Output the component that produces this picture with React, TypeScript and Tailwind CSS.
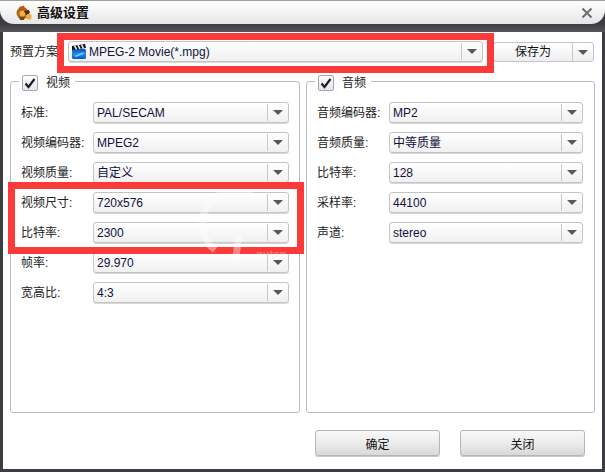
import React from 'react';

const font = { fontFamily: '"Liberation Sans", "Noto Sans CJK SC", sans-serif' };

const Arrow: React.FC = () => (
    <svg width="10" height="5" viewBox="0 0 10 5" className="block">
        <polygon points="0,0 10,0 5,5" fill="#55585c" />
    </svg>
);

const Combo: React.FC<{ value: string; className?: string; icon?: React.ReactNode }> = ({ value, className, icon }) => (
    <div className={`flex h-[21px] items-center rounded-[3px] border border-[#c3c3c8] bg-gradient-to-b from-[#ffffff] to-[#f0f0f0] shadow-[0_1px_0_#d8d8d8] ${className ?? ''}`}>
        <div className="flex min-w-0 flex-1 items-center gap-[2px] pl-[3px] text-[12px] text-[#101040]">
            {icon}
            <span>{value}</span>
        </div>
        <div className="my-[1px] flex h-[17px] w-[21px] items-center justify-center border-l border-[#c8c8c8]">
            <Arrow />
        </div>
    </div>
);

const Row: React.FC<{ label: string; value: string }> = ({ label, value }) => (
    <div className="flex h-[21px] items-center">
        <span className="w-[72px] shrink-0 text-[12px] leading-none text-[#222]">{label}</span>
        <Combo value={value} className="flex-1" />
    </div>
);

const CheckBox: React.FC = () => (
    <div className="flex h-[16px] w-[16px] items-center justify-center rounded-[2px] border border-[#a8a8ac] bg-gradient-to-b from-[#ffffff] to-[#e4e4e4]">
        <svg width="12" height="11" viewBox="0 0 12 11">
            <path d="M1.5 5.5 L4.5 9 L10.5 1" fill="none" stroke="#16202c" strokeWidth="2.2" />
        </svg>
    </div>
);

const Group: React.FC<{ title: string; rows: [string, string][]; className: string }> = ({ title, rows, className }) => (
    <div className={`relative h-[332px] rounded-[3px] border border-[#b9bcc2] ${className}`}>
        <div className="absolute left-[8px] top-[-7px] flex h-[16px] items-center gap-[8px] bg-white px-[3px]">
            <CheckBox />
            <span className="pr-[2px] text-[12px] text-[#222]">{title}</span>
        </div>
        <div className="flex flex-col gap-[9px] pt-[20px]">
            {rows.map(([label, value]) => (
                <Row key={label} label={label} value={value} />
            ))}
        </div>
    </div>
);

const ClapperIcon: React.FC = () => (
    <svg width="16" height="17" viewBox="0 0 16 17" className="-ml-[1px] shrink-0">
        <defs>
            <linearGradient id="clapBody" x1="0" y1="0" x2="0" y2="1">
                <stop offset="0" stopColor="#0a4fb8" />
                <stop offset="0.5" stopColor="#1f8cf0" />
                <stop offset="1" stopColor="#0a58c0" />
            </linearGradient>
        </defs>
        <rect x="1" y="6" width="14" height="10" rx="1.5" fill="url(#clapBody)" />
        <path d="M3 13 L12 9 L13 11 L5 14 Z" fill="#6cc4ff" />
        <path d="M1 3 L14 1 L15 5 L1 7 Z" fill="#12161c" />
        <path d="M3.5 2.7 L5.5 6.4 M7 2.2 L9 5.9 M10.5 1.7 L12.5 5.4" stroke="#f2f2f2" strokeWidth="1.5" />
    </svg>
);

const AppIcon: React.FC = () => (
    <svg width="16" height="16" viewBox="0 0 16 16">
        <circle cx="6.5" cy="8" r="6" fill="#a8661a" />
        <circle cx="6.5" cy="8.5" r="3" fill="#f0b040" />
        <path d="M3 2 L8 0.5 L9 4 L5 6 Z" fill="#c8501c" />
        <rect x="10" y="9" width="5.5" height="5.5" rx="1.5" fill="#eeb040" />
        <path d="M8 6 L13 5 L14 8 L10 10 Z" fill="#4a2c10" />
        <path d="M3 12 L9 12 L8 15 L4 15 Z" fill="#7a4510" />
    </svg>
);

const Button: React.FC<{ label: string }> = ({ label }) => (
    <div className="flex h-[26px] w-[125px] items-center justify-center rounded-[3px] border border-[#b4b6bc] bg-gradient-to-b from-[#f8f8f8] via-[#ececec] to-[#d8d8d8] pt-[3px] text-[12px] text-[#111] shadow-[0_1px_0_#c8c8c8]">
        {label}
    </div>
);

const videoRows: [string, string][] = [
    ['标准:', 'PAL/SECAM'],
    ['视频编码器:', 'MPEG2'],
    ['视频质量:', '自定义'],
    ['视频尺寸:', '720x576'],
    ['比特率:', '2300'],
    ['帧率:', '29.970'],
    ['宽高比:', '4:3'],
];

const audioRows: [string, string][] = [
    ['音频编码器:', 'MP2'],
    ['音频质量:', '中等质量'],
    ['比特率:', '128'],
    ['采样率:', '44100'],
    ['声道:', 'stereo'],
];

const App: React.FC = () => {
    return (
        <div style={font} className="relative flex h-[472px] w-[605px] flex-col overflow-hidden bg-[#3c3d40]">
            {/* title bar */}
            <div className="flex h-[24px] items-center rounded-b-[14px] border-t border-[#a0a0a0] bg-gradient-to-b from-[#ffffff] to-[#e6e6e6] pl-[16px] pr-[12px]">
                <AppIcon />
                <span className="ml-[5px] text-[13px] font-bold text-[#111]">高级设置</span>
                <svg width="12" height="12" viewBox="0 0 12 12" className="ml-auto">
                    <path d="M1.5 1.5 L10.5 10.5 M10.5 1.5 L1.5 10.5" stroke="#6a6e72" strokeWidth="2" />
                </svg>
            </div>
            <div className="h-[8px] bg-gradient-to-b from-[#3c3d40] to-[#55565a]" />

            <div className="mx-[3px] mb-[3px] flex-1 bg-white px-[7px]">
                {/* preset row */}
                <div className="mt-[9px] flex h-[21px] items-center">
                    <span className="w-[58px] shrink-0 pt-[1px] text-[12px] text-[#222]">预置方案</span>
                    <Combo value="MPEG-2 Movie(*.mpg)" className="w-[415px]" icon={<ClapperIcon />} />
                    <div className="ml-[10px] mr-[1px] mt-[1px] flex h-[20px] flex-1 items-center rounded-[3px] border border-[#c3c3c8] bg-gradient-to-b from-[#ffffff] to-[#eeeeee]">
                        <span className="flex-1 text-center text-[12px] text-[#111]">保存为</span>
                        <div className="flex h-full w-[21px] items-center justify-center border-l border-[#c8c8c8]">
                            <Arrow />
                        </div>
                    </div>
                </div>

                {/* groups */}
                <div className="mt-[19px] flex gap-[6px]">
                    <Group title="视频" rows={videoRows} className="w-[290px] px-[10px]" />
                    <Group title="音频" rows={audioRows} className="flex-1 pl-[10px] pr-[11px]" />
                </div>

                {/* footer buttons */}
                <div className="mt-[17px] flex justify-end gap-[20px] pr-[10px]">
                    <Button label="确定" />
                    <Button label="关闭" />
                </div>
            </div>

            {/* red highlight boxes laid over the screenshot */}
            <div className="absolute left-[57px] top-[33px] h-[40px] w-[437px] border-[7px] border-[#fd3a3a]" />
            <div className="absolute left-[8px] top-[182px] h-[72px] w-[296px] border-[7px] border-[#fd3a3a]" />

            {/* faint watermark over everything */}
            <svg width="110" height="90" viewBox="0 0 110 90" className="pointer-events-none absolute left-[195px] top-[190px]">
                <path d="M20 60 A30 30 0 0 1 60 8" fill="none" stroke="#ffffff" strokeOpacity="0.4" strokeWidth="7" />
                <path d="M44 46 L40 72" fill="none" stroke="#ffffff" strokeOpacity="0.4" strokeWidth="7" />
            </svg>
            <span className="pointer-events-none absolute left-[256px] top-[246px] text-[11px] font-bold text-white/30">quton</span>
        </div>
    );
};

export default App;
